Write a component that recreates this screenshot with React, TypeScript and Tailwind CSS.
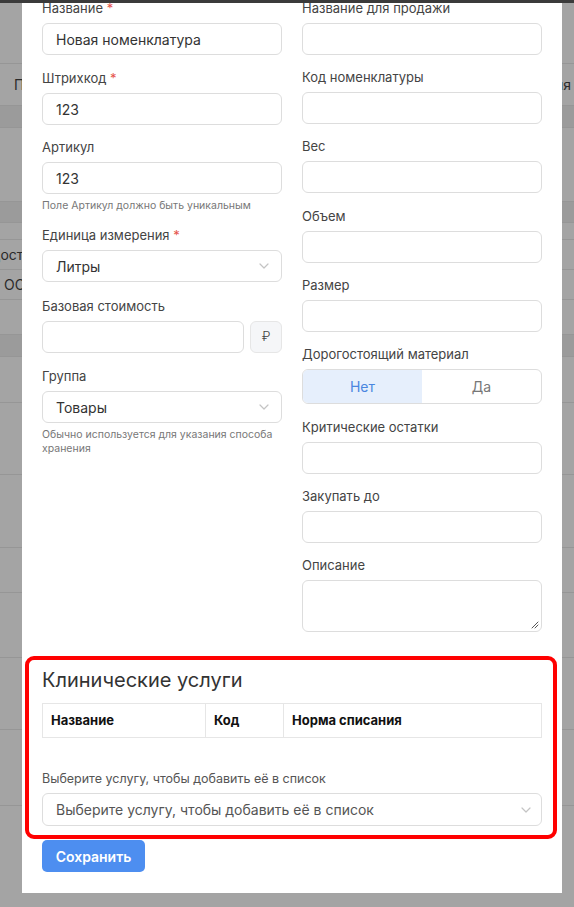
import React from 'react';

const Chevron = () => (
  <svg width="10" height="6" viewBox="0 0 10 6" className="shrink-0">
    <path d="M1 1l4 4 4-4" fill="none" stroke="#c4c4c4" strokeWidth="1.2" strokeLinecap="round" strokeLinejoin="round" />
  </svg>
);

function Label({ text, required }: { text: string; required?: boolean }) {
  return (
    <div className="text-[13px] leading-[15px] text-[#444] mb-[7px]">
      {text}
      {required && <span className="text-[#e5534b]"> *</span>}
    </div>
  );
}

function Input({ value }: { value?: string }) {
  return (
    <div className="h-8 w-full rounded-md border border-[#dddddd] bg-white px-[13px] flex items-center text-[14px] text-[#333]">
      {value}
    </div>
  );
}

function Select({ value }: { value: string }) {
  return (
    <div className="h-8 w-full rounded-md border border-[#dddddd] bg-white pl-[13px] pr-[12px] flex items-center justify-between text-[14px] text-[#333]">
      <span>{value}</span>
      <Chevron />
    </div>
  );
}

function Help({ children }: { children: React.ReactNode }) {
  return <div className="mt-[5px] text-[10.5px] leading-[14px] text-[#777]">{children}</div>;
}

// what sits behind the modal, dimmed
const ROWS: { h: number; band?: boolean; left?: string; right?: string; leftShift?: string }[] = [
  { h: 61 },
  { h: 42, left: 'Поставщик', right: 'Категория' },
  { h: 22, band: true },
  { h: 74 },
  { h: 21, band: true },
  { h: 17 },
  { h: 30, left: 'Доставка', leftShift: '-ml-[11px]' },
  { h: 30, left: 'ООО Ромашка', leftShift: 'ml-[4px]' },
  { h: 35 },
  { h: 22, band: true },
  { h: 46 },
  { h: 72 },
  { h: 73 },
  { h: 45 },
  { h: 65 },
  { h: 72 },
  { h: 76 },
  { h: 120 },
];

export default function App() {
  return (
    <div className="relative w-[574px] h-[907px] overflow-hidden bg-[#a4a4a4] font-['Inter',sans-serif]">
      <div className="h-[3px] bg-[#3b3b3b]" />
      <div className="flex flex-col">
        {ROWS.map((r, i) => (
          <div
            key={i}
            className={`flex items-center justify-between text-[14px] text-[#2a2a2a] border-b border-[#969696] ${r.band ? 'bg-[#9b9b9b]' : ''}`}
            style={{ height: r.h }}
          >
            <span className={`whitespace-nowrap ${r.leftShift ?? 'ml-[14px]'}`}>{r.left}</span>
            <span className="whitespace-nowrap mr-[3px]">{r.right}</span>
          </div>
        ))}
      </div>

      <div className="absolute left-[22px] top-[3px] w-[540px] h-[890px] bg-white overflow-hidden">
        <div className="px-5 -mt-[2px]">
          <div className="grid grid-cols-2 gap-x-5">
            <div className="flex flex-col">
              <div className="mb-[16px]">
                <Label text="Название" required />
                <Input value="Новая номенклатура" />
              </div>
              <div className="mb-[15px]">
                <Label text="Штрихкод" required />
                <Input value="123" />
              </div>
              <div className="mb-[15px]">
                <Label text="Артикул" />
                <Input value="123" />
                <Help>Поле Артикул должно быть уникальным</Help>
              </div>
              <div className="mb-[17px]">
                <Label text="Единица измерения" required />
                <Select value="Литры" />
              </div>
              <div className="mb-[16px]">
                <Label text="Базовая стоимость" />
                <div className="flex gap-[6px]">
                  <Input />
                  <div className="h-8 w-8 shrink-0 rounded-md border border-[#e6e6e6] bg-[#f5f6f8] flex items-center justify-center text-[13px] font-light text-[#444]">
                    ₽
                  </div>
                </div>
              </div>
              <div>
                <Label text="Группа" />
                <Select value="Товары" />
                <Help>
                  Обычно используется для указания способа
                  <br />
                  хранения
                </Help>
              </div>
            </div>

            <div className="flex flex-col">
              <div className="mb-[15px]">
                <Label text="Название для продажи" />
                <Input />
              </div>
              <div className="mb-[15px]">
                <Label text="Код номенклатуры" />
                <Input />
              </div>
              <div className="mb-[16px]">
                <Label text="Вес" />
                <Input />
              </div>
              <div className="mb-[15px]">
                <Label text="Объем" />
                <Input />
              </div>
              <div className="mb-[15px]">
                <Label text="Размер" />
                <Input />
              </div>
              <div className="mb-[16px]">
                <Label text="Дорогостоящий материал" />
                <div className="flex h-[35px] rounded-md border border-[#dddddd] overflow-hidden text-[14px]">
                  <div className="flex-1 bg-[#e6effc] text-[#4a86e0] flex items-center justify-center">Нет</div>
                  <div className="flex-1 text-[#777] flex items-center justify-center">Да</div>
                </div>
              </div>
              <div className="mb-[15px]">
                <Label text="Критические остатки" />
                <Input />
              </div>
              <div className="mb-[15px]">
                <Label text="Закупать до" />
                <Input />
              </div>
              <div>
                <Label text="Описание" />
                <div className="relative h-[52px] rounded-md border border-[#dddddd]">
                  <svg width="8" height="8" viewBox="0 0 8 8" className="absolute right-[2px] bottom-[2px]">
                    <path d="M7 1L1 7M7 4L4 7" stroke="#555" strokeWidth="1" strokeLinecap="round" />
                  </svg>
                </div>
              </div>
            </div>
          </div>

          <div className="mt-[24px] -ml-[17px] -mr-[15px] rounded-[9px] border-4 border-[#ff0000] pl-[13px] pr-[11px] pt-[8px] pb-[9px]">
            <h2 className="text-[20px] leading-6 text-[#333]">Клинические услуги</h2>
            <table className="mt-[11px] w-full border-collapse text-[13px] font-bold text-[#111]">
              <thead>
                <tr className="h-[34px]">
                  <th className="w-[163px] border border-[#e6e6e6] px-2 text-left">Название</th>
                  <th className="w-[78px] border border-[#e6e6e6] px-2 text-left">Код</th>
                  <th className="border border-[#e6e6e6] px-2 text-left">Норма списания</th>
                </tr>
              </thead>
            </table>
            <div className="mt-[33px] text-[12.5px] leading-[15px] text-[#555] mb-[7px]">
              Выберите услугу, чтобы добавить её в список
            </div>
            <div className="h-[33px] w-full rounded-md border border-[#dddddd] pl-[13px] pr-[10px] flex items-center justify-between text-[14px] text-[#555]">
              <span>Выберите услугу, чтобы добавить её в список</span>
              <Chevron />
            </div>
          </div>

          <button className="mt-[1px] h-8 w-[103px] rounded-[5px] bg-[#4d8ef0] text-white text-[14px] font-semibold">
            Сохранить
          </button>
        </div>
      </div>
    </div>
  );
}
